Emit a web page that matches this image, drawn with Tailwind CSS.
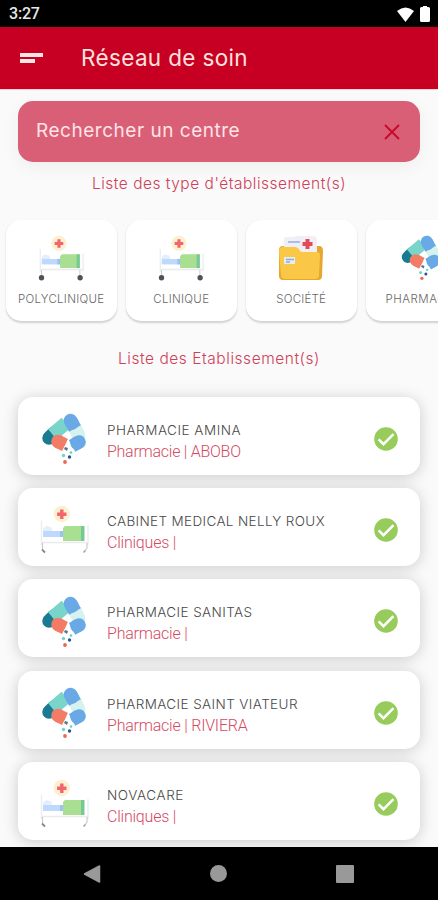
<!DOCTYPE html>
<html lang="fr">
<head>
<meta charset="utf-8">
<meta name="viewport" content="width=device-width, initial-scale=1">
<title>Réseau de soin</title>
<script src="https://cdn.jsdelivr.net/npm/@tailwindcss/browser@4"></script>
</head>
<body class="w-[438px] h-[900px] overflow-hidden bg-[#fafafa] font-['Inter',sans-serif]">
<svg width="0" height="0" class="absolute">
  <defs>
    <symbol id="mattress" viewBox="0 0 50 50">
      <circle cx="22.800" cy="9" r="8.300" fill="#fbf0d0"/>
      <path d="M21.100 4.500h3.400v3h3v3.400h-3v3h-3.400v-3h-3v-3.400h3z" fill="#f4646f"/>
      <path d="M2.500 15.500v24.500M49 20v20" stroke="#eceef1" stroke-width="1.500" fill="none"/>
      <path d="M3 37.500h46" stroke="#e9ebee" stroke-width="1.600"/>
      <path d="M4 26q0-4 2-4q2-2 4 0q3-1 3 4z" fill="#e4effd"/>
      <path d="M4 26h20v6H4z" fill="#bfd9fc"/>
      <path d="M21 26h4v6h-4z" fill="#9dc1f3"/>
      <path d="M26 21h19v15H24V23z" fill="#a9df91"/>
      <path d="M42 21h3.500v15H42z" fill="#77c994"/>
    </symbol>
    <symbol id="bed" viewBox="0 0 50 50">
      <use href="#mattress" width="50" height="50"/>
      <path d="M3.800 38v6M45.500 38v6" stroke="#c4c7cc" stroke-width="1"/>
      <circle cx="3.800" cy="46.500" r="2.900" fill="#505058"/>
      <circle cx="45.800" cy="46.500" r="2.900" fill="#505058"/>
    </symbol>
    <symbol id="bed-open" viewBox="0 0 50 50">
      <use href="#mattress" width="50" height="50"/>
      <path d="M3.500 38v6.500M48 38v5l-3 4" stroke="#c9cbd0" stroke-width="1.200" fill="none"/>
      <path d="M3 44.500l3 3" stroke="#85878c" stroke-width="1.800"/>
      <path d="M44.500 47.500l2-2" stroke="#9b9da2" stroke-width="1.300"/>
    </symbol>
    <symbol id="pills" viewBox="0 0 46 52">
      <g stroke-linecap="round" stroke-width="13.500" fill="none">
        <path d="M8 25L13 20" stroke="#197a92"/>
        <path d="M11.500 21.500L25 10" stroke="#79d5ca" stroke-linecap="butt"/>
        <path d="M34 15L37.500 22" stroke="#d5f2ef"/>
        <path d="M29.500 7.500L31 10" stroke="#69a9e5"/>
        <path d="M29.500 7.500L34 15.500" stroke="#69a9e5" stroke-linecap="butt"/>
        <path d="M17 28.500L18 29" stroke="#f27c65"/>
        <path d="M17 28.500L24 32" stroke="#f27c65" stroke-linecap="butt"/>
        <path d="M38 29L36 30" stroke="#69a9e5"/>
        <path d="M38 29L31 33" stroke="#69a9e5" stroke-linecap="butt"/>
      </g>
      <path d="M27 27l1 3l-2 2l2 3l-1 3" stroke="#fff" stroke-width="1.800" fill="none"/>
      <path d="M24 34l3 1l-1 3l-3-2z" fill="#59748d"/>
      <circle cx="30" cy="39.500" r="1.300" fill="#65cfc1"/>
      <circle cx="22.500" cy="42.500" r="1.700" fill="#73d3c6"/>
      <circle cx="28.500" cy="44" r="1.700" fill="#24568f"/>
      <circle cx="24" cy="49" r="1.900" fill="#ef6650"/>
    </symbol>
    <symbol id="folder" viewBox="0 0 46 46">
      <path d="M1 15q0-4 4-4h36q4 0 4 5l-1 25q0 4-4 4H5q-4 0-4-4z" fill="#e5a72e"/>
      <path d="M6 4q0-2 2-2h8l2-1h17q4 0 4 4v25H6z" fill="#f0eff5"/>
      <path d="M10 7h12" stroke="#a5b7e5" stroke-width="1.800"/>
      <path d="M27.500 4h4v3h3v4h-3v3h-4v-3h-3v-4h3z" fill="#e34b5b"/>
      <path d="M1 16q0-4 4-4h12q2 0 4 2l1 2q1 1 3 1h14q3 0 3 3l-1 20q0 4-4 4H7q-4 0-4-4z" fill="#fbc747"/>
      <path d="M6 22h11v7H6z" fill="#e4edf3"/>
      <path d="M8 24.500h8M8 27h4" stroke="#91aacc" stroke-width="1.300"/>
    </symbol>
    <symbol id="check" viewBox="0 0 24 24">
      <circle cx="12" cy="12" r="11.800" fill="#97cb5c"/>
      <path d="M4.600 12.300l4.900 4.900L19.500 7.200" fill="none" stroke="#fff" stroke-width="2.500"/>
    </symbol>
  </defs>
</svg>
<div class="flex h-full flex-col">
  <div class="flex h-[27px] shrink-0 items-center justify-between bg-black pl-[9px] pr-[8px] pt-[1px]">
    <span class="font-['Roboto'] text-[16px] font-medium tracking-[-0.2px] text-[#e8e8e8]">3:27</span>
    <div class="flex items-center gap-[6px]">
      <svg class="h-[15px] w-[17px]" viewBox="0 0 17 15"><path d="M0 4Q8.500-3 17 4L8.500 15Z" fill="#fff"/></svg>
      <svg class="h-[16px] w-[10px]" viewBox="0 0 10 16"><path d="M3 0h4v1h1.500Q10 1 10 2.500v12q0 1.500-1.500 1.500h-7Q0 16 0 14.500v-12Q0 1 1.500 1H3z" fill="#fff"/></svg>
    </div>
  </div>
  <header class="flex h-[62px] shrink-0 items-center bg-[#c70023] pl-5">
    <svg class="h-[10px] w-[23px]" viewBox="0 0 23 10"><path d="M0 0h23v4H0zM0 6h15v4H0z" fill="#ffe6e3"/></svg>
    <h1 class="ml-[38px] text-[22.500px] leading-none tracking-[0.350px] font-normal text-[#ffe1de]">Réseau de soin</h1>
  </header>
  <main class="flex min-h-0 flex-1 flex-col overflow-hidden border-t border-[#ffd5d3]">
    <div class="mx-[18px] mt-[11px] flex h-[61px] shrink-0 items-center justify-between rounded-[15px] bg-[#d95f76] pl-[18px] pr-[20px] shadow-[0_5px_18px_rgba(0,0,0,0.05)]">
      <span class="mb-[2px] text-[19px] leading-none tracking-[0.520px] text-[#ffe3e6]">Rechercher un centre</span>
      <svg class="h-[16px] w-[16px]" viewBox="0 0 16 16"><path d="M1 1l14 14M15 1L1 15" stroke="#c90a2d" stroke-width="1.900"/></svg>
    </div>
    <h2 class="mt-[11px] h-[22px] shrink-0 text-center text-[15.500px] leading-[22px] tracking-[0.500px] font-light text-[#cf4059]">Liste des type d'établissement(s)</h2>
    <div class="mt-[25px] flex shrink-0 gap-[9.500px] pl-[6px]">
      <div class="flex h-[101px] w-[110.500px] shrink-0 flex-col items-center rounded-[15px] bg-white pt-[15px] shadow-[0_1.500px_2px_rgba(0,0,0,0.16)]">
        <svg class="h-[46px] w-[46px]"><use href="#bed"/></svg>
        <span class="mt-[10px] text-[11.500px] leading-[16px] tracking-[0.300px] font-light text-[#666]">POLYCLINIQUE</span>
      </div>
      <div class="flex h-[101px] w-[110.500px] shrink-0 flex-col items-center rounded-[15px] bg-white pt-[15px] shadow-[0_1.500px_2px_rgba(0,0,0,0.16)]">
        <svg class="h-[46px] w-[46px]"><use href="#bed"/></svg>
        <span class="mt-[10px] text-[11.500px] leading-[16px] tracking-[0.300px] font-light text-[#666]">CLINIQUE</span>
      </div>
      <div class="flex h-[101px] w-[110.500px] shrink-0 flex-col items-center rounded-[15px] bg-white pt-[15px] shadow-[0_1.500px_2px_rgba(0,0,0,0.16)]">
        <svg class="h-[46px] w-[46px]"><use href="#folder"/></svg>
        <span class="mt-[10px] text-[11.500px] leading-[16px] tracking-[0.200px] font-light text-[#666]">SOCIÉTÉ</span>
      </div>
      <div class="flex h-[101px] w-[110.500px] shrink-0 flex-col items-center rounded-[15px] bg-white pt-[15px] shadow-[0_1.500px_2px_rgba(0,0,0,0.16)]">
        <svg class="h-[46px] w-[46px]"><use href="#pills"/></svg>
        <span class="mt-[10px] text-[11.500px] leading-[16px] tracking-[0.550px] font-light text-[#666]">PHARMACIE</span>
      </div>
    </div>
    <h2 class="mt-[27px] h-[22px] shrink-0 text-center text-[15.500px] leading-[22px] tracking-[0.540px] font-light text-[#cf4059]">Liste des Etablissement(s)</h2>
    <div class="mt-[26.500px] flex shrink-0 flex-col gap-[13.400px] px-[18px]">
      <div class="flex h-[78px] items-center rounded-[15px] bg-white pl-[20px] pr-[22px] shadow-[0_2px_15px_rgba(0,0,0,0.19)]">
        <svg class="mt-[7px] h-[52px] w-[52px]"><use href="#pills"/></svg>
        <div class="ml-[17px] mt-[11px] flex-1">
          <div class="text-[13.500px] leading-[21px] tracking-[0.520px] font-light whitespace-nowrap text-[#484848]">PHARMACIE AMINA</div>
          <div class="font-['Roboto'] text-[16px] leading-[22px] tracking-[-0.260px] font-light text-[#d44a63]">Pharmacie | ABOBO</div>
        </div>
        <svg class="mt-[6px] h-[24px] w-[24px]"><use href="#check"/></svg>
      </div>
      <div class="flex h-[78px] items-center rounded-[15px] bg-white pl-[20px] pr-[22px] shadow-[0_2px_15px_rgba(0,0,0,0.19)]">
        <svg class="mt-[6px] h-[50px] w-[52px]"><use href="#bed-open"/></svg>
        <div class="ml-[17px] mt-[11px] flex-1">
          <div class="text-[13.500px] leading-[21px] tracking-[0.360px] font-light whitespace-nowrap text-[#484848]">CABINET MEDICAL NELLY ROUX</div>
          <div class="font-['Roboto'] text-[16px] leading-[22px] tracking-[-0.220px] font-light text-[#d44a63]">Cliniques |</div>
        </div>
        <svg class="mt-[6px] h-[24px] w-[24px]"><use href="#check"/></svg>
      </div>
      <div class="flex h-[78px] items-center rounded-[15px] bg-white pl-[20px] pr-[22px] shadow-[0_2px_15px_rgba(0,0,0,0.19)]">
        <svg class="mt-[7px] h-[52px] w-[52px]"><use href="#pills"/></svg>
        <div class="ml-[17px] mt-[11px] flex-1">
          <div class="text-[13.500px] leading-[21px] tracking-[0.400px] font-light whitespace-nowrap text-[#484848]">PHARMACIE SANITAS</div>
          <div class="font-['Roboto'] text-[16px] leading-[22px] tracking-[-0.220px] font-light text-[#d44a63]">Pharmacie |</div>
        </div>
        <svg class="mt-[6px] h-[24px] w-[24px]"><use href="#check"/></svg>
      </div>
      <div class="flex h-[78px] items-center rounded-[15px] bg-white pl-[20px] pr-[22px] shadow-[0_2px_15px_rgba(0,0,0,0.19)]">
        <svg class="mt-[7px] h-[52px] w-[52px]"><use href="#pills"/></svg>
        <div class="ml-[17px] mt-[11px] flex-1">
          <div class="text-[13.500px] leading-[21px] tracking-[0.400px] font-light whitespace-nowrap text-[#484848]">PHARMACIE SAINT VIATEUR</div>
          <div class="font-['Roboto'] text-[16px] leading-[22px] tracking-[-0.220px] font-light text-[#d44a63]">Pharmacie | RIVIERA</div>
        </div>
        <svg class="mt-[6px] h-[24px] w-[24px]"><use href="#check"/></svg>
      </div>
      <div class="flex h-[78px] items-center rounded-[15px] bg-white pl-[20px] pr-[22px] shadow-[0_2px_15px_rgba(0,0,0,0.19)]">
        <svg class="mt-[6px] h-[50px] w-[52px]"><use href="#bed-open"/></svg>
        <div class="ml-[17px] mt-[11px] flex-1">
          <div class="text-[13.500px] leading-[21px] tracking-[0.600px] font-light whitespace-nowrap text-[#484848]">NOVACARE</div>
          <div class="font-['Roboto'] text-[16px] leading-[22px] tracking-[-0.220px] font-light text-[#d44a63]">Cliniques |</div>
        </div>
        <svg class="mt-[6px] h-[24px] w-[24px]"><use href="#check"/></svg>
      </div>
    </div>
  </main>
  <nav class="flex h-[53px] shrink-0 items-center justify-between bg-black pl-[83px] pr-[84px]">
    <svg class="h-[18px] w-[18px]" viewBox="0 0 18 18"><path d="M1.500 9L16.500 1v16z" fill="#999" stroke="#999" stroke-width="1.500" stroke-linejoin="round"/></svg>
    <div class="h-[17px] w-[17px] rounded-full bg-[#999]"></div>
    <div class="h-[18px] w-[18px] rounded-[1px] bg-[#999]"></div>
  </nav>
</div>
</body>
</html>
